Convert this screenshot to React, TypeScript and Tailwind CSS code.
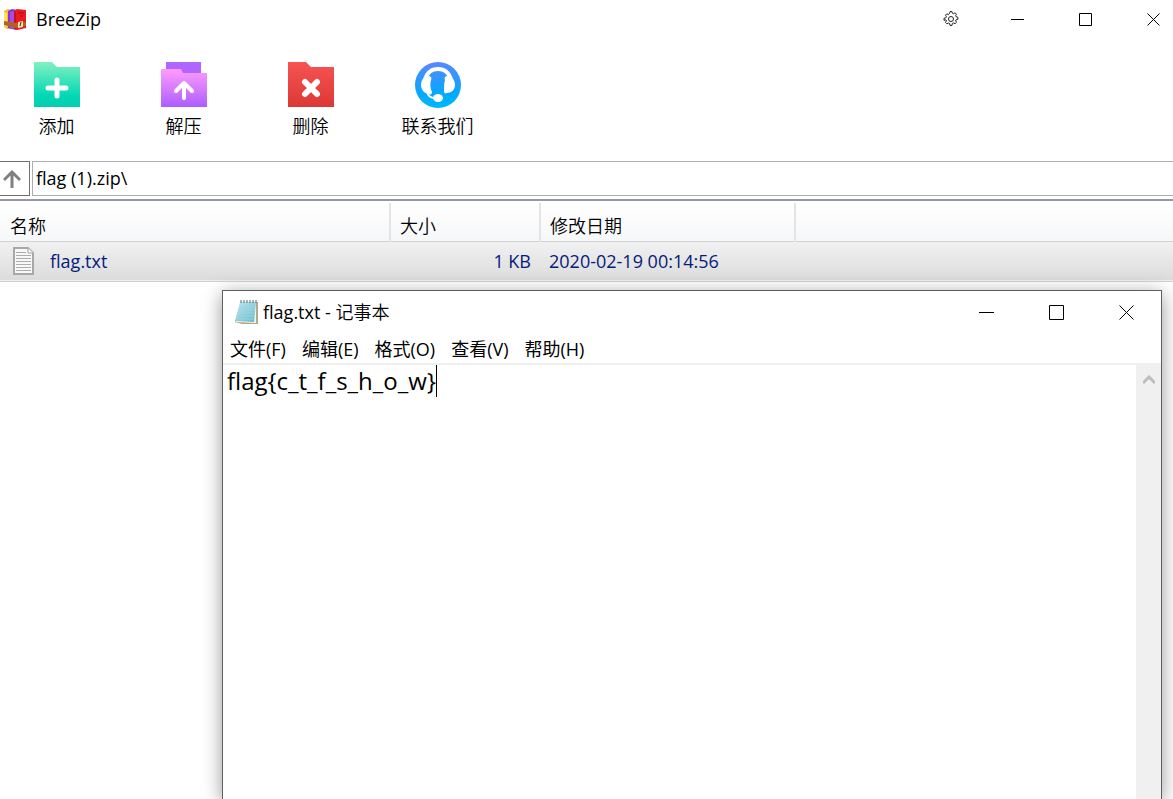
import { useState } from "react";
import type { ReactNode } from "react";

const files = [{ name: "flag.txt", size: "1 KB", modified: "2020-02-19 00:14:56" }];

const menus = ["文件(F)", "编辑(E)", "格式(O)", "查看(V)", "帮助(H)"];

function AppLogo() {
  return (
    <svg width="24" height="24" viewBox="0 0 24 24" aria-hidden="true">
      <path d="M1 4l4-2 4 1v18l-5 1-3-2z" fill="#f5b82e" />
      <path d="M1 5l3 1v14l-3-1z" fill="#ffe45c" />
      <path d="M5 4l4-2 5 1v20l-6-1-3-1z" fill="#8a35c9" />
      <path d="M7 5l4-1v18l-4-1z" fill="#a54be8" />
      <path d="M11 4l3-2 9 1v18l-9 2-3-1z" fill="#ee1820" />
      <path d="M11 4l2 1v17l-2-1z" fill="#c80f1a" />
      <path d="M15 6h6M17 9h3" stroke="#a81010" strokeWidth="1" />
      <path d="M1 14l12 2 10-1v4l-10 2-12-3z" fill="#b0641c" />
      <path d="M15 15l5-1v6l-5 1z" fill="#f3dfb0" />
      <path d="M18 15l-1 4" stroke="#3f2a18" strokeWidth="1" fill="none" />
    </svg>
  );
}

function AddIcon() {
  return (
    <svg width="46" height="46" viewBox="0 0 46 46" aria-hidden="true">
      <defs>
        <linearGradient id="add" x1="0" y1="0" x2="0" y2="1">
          <stop offset="0" stopColor="#83f0c0" />
          <stop offset="0.75" stopColor="#02d8b5" />
          <stop offset="1" stopColor="#06cdb0" />
        </linearGradient>
      </defs>
      <path d="M0 0h18l5 5h23v40H0z" fill="url(#add)" />
      <path d="M23 18v16M14 26h18" stroke="#fff" strokeWidth="5" strokeLinecap="round" />
    </svg>
  );
}

function ExtractIcon() {
  return (
    <svg width="46" height="46" viewBox="0 0 46 46" aria-hidden="true">
      <defs>
        <linearGradient id="extract" x1="0" y1="0" x2="0" y2="1">
          <stop offset="0" stopColor="#ff9cff" />
          <stop offset="1" stopColor="#ad5dff" />
        </linearGradient>
      </defs>
      <path d="M5 0h35v14H5z" fill="#b065ff" />
      <path d="M0 7h20l2 4h24v34H0z" fill="url(#extract)" />
      <path d="M23 36V22M15 29l8-8 8 8" stroke="#fff" strokeWidth="4" strokeLinecap="round" strokeLinejoin="round" fill="none" />
    </svg>
  );
}

function DeleteIcon() {
  return (
    <svg width="46" height="46" viewBox="0 0 46 46" aria-hidden="true">
      <defs>
        <linearGradient id="delete" x1="0" y1="0" x2="0" y2="1">
          <stop offset="0" stopColor="#f75353" />
          <stop offset="1" stopColor="#dc3835" />
        </linearGradient>
      </defs>
      <path d="M0 0h18l5 5h23v40H0z" fill="url(#delete)" />
      <path d="M17 20l12 12M29 20L17 32" stroke="#fff" strokeWidth="6" strokeLinecap="round" />
    </svg>
  );
}

function ContactIcon() {
  return (
    <svg width="46" height="46" viewBox="0 0 46 46" aria-hidden="true">
      <defs>
        <linearGradient id="contact" x1="0" y1="0" x2="0" y2="1">
          <stop offset="0" stopColor="#5c86ff" />
          <stop offset="0.7" stopColor="#00aaff" />
          <stop offset="1" stopColor="#00b8ff" />
        </linearGradient>
      </defs>
      <circle cx="23" cy="23" r="23" fill="url(#contact)" />
      <path d="M10 18C12 10 17 7 23 7s11 3 13 11" stroke="#fff" strokeWidth="4" fill="none" />
      <path d="M13 14c3 0 4 2 3 4-1 4-1 8 1 12 0 2-1 3-3 2-4 0-8-4-8-9s3-9 7-9z" fill="#fff" />
      <path d="M33 14c-3 0-4 2-3 4-1 4-1 7-1 11 0 2 1 3 3 2 4 0 8-3 8-8s-3-9-7-9z" fill="#fff" />
      <path d="M12 30c1 4 4 6 8 6" stroke="#fff" strokeWidth="2" fill="none" />
      <ellipse cx="23" cy="36" rx="5" ry="4" fill="#fff" />
    </svg>
  );
}

function GearIcon() {
  return (
    <svg width="16" height="16" viewBox="0 0 16 16" fill="none" stroke="#222" aria-hidden="true">
      <path
        d="M6.6 2.2L7 .6h2l.4 1.6 1.1.5 1.5-.9 1.5 1.4-.9 1.5.5 1.1 1.8.5v2l-1.8.4-.5 1.1.9 1.5-1.4 1.4-1.5-.8-1.2.5-.4 2H7l-.4-1.9-1.2-.5-1.5.8-1.4-1.4.9-1.5-.5-1.1L1 9.3v-2l1.9-.5.5-1.1-.9-1.5 1.4-1.4 1.5.9z"
        strokeLinejoin="round"
      />
      <circle cx="8" cy="8" r="2.5" />
    </svg>
  );
}

function FileIcon() {
  return (
    <svg width="24" height="28" viewBox="0 0 24 28" aria-hidden="true">
      <path d="M2 1h14l5 5v21H2z" fill="#f8f8f8" stroke="#a8a8a8" strokeWidth="2" />
      <path d="M16 1v5h5" fill="#fff" stroke="#a0a0a0" />
      <path d="M4 5.5h10M4 8.5h15M4 11.5h15M4 14.5h15M4 17.5h15M4 20.5h15M4 23.5h15" stroke="#acacac" />
    </svg>
  );
}

function NotepadIcon() {
  return (
    <svg width="24" height="26" viewBox="0 0 24 26" aria-hidden="true">
      <defs>
        <linearGradient id="pad" x1="0" y1="0" x2="1" y2="1">
          <stop offset="0" stopColor="#c2eaf0" />
          <stop offset="1" stopColor="#66b8cb" />
        </linearGradient>
      </defs>
      <path d="M6 4l17-1v22H7L0 23z" fill="#b5a88a" />
      <path d="M5 3h16v21l-20-1z" fill="#f4f4ee" />
      <path d="M5 3h16l-2 20-19-1z" fill="url(#pad)" />
      <path d="M5 8h15M4 11h16M4 14h15M3 17h16M3 20h15" stroke="#9ad5e0" strokeWidth="1" />
      <path d="M6 4V1M9 4V1M12 4V1M15 4V1M18 4V1M21 4V1" stroke="#57666b" strokeWidth="1" />
    </svg>
  );
}

// minimize / maximize / close glyphs, shared by both windows
function WindowGlyph({ kind, size }: { kind: "min" | "max" | "close"; size: number }) {
  const end = size - 0.5;
  const mid = Math.floor(size / 2) + 0.5;
  return (
    <svg width={size} height={size} fill="none" stroke="#000" aria-hidden="true">
      {kind === "min" && <path d={`M0 ${mid}H${size}`} />}
      {kind === "max" && <path d={`M.5 .5H${end}V${end}H.5z`} />}
      {kind === "close" && <path d={`M.5 .5L${end} ${end}M${end} .5L.5 ${end}`} />}
    </svg>
  );
}

function ToolButton({ label, children }: { label: string; children: ReactNode }) {
  return (
    <button type="button" className="flex w-[113px] flex-col items-center gap-1 hover:bg-gray-100">
      {children}
      <span className="leading-7 font-[350] whitespace-nowrap">{label}</span>
    </button>
  );
}

function Notepad() {
  const [text, setText] = useState("flag{c_t_f_s_h_o_w}");

  return (
    <section className="absolute top-[290px] right-[11px] bottom-0 left-[222px] flex flex-col border border-b-0 border-[#5f5f5f] bg-white shadow-[0_4px_18px_rgba(0,0,0,0.4)]">
      <header className="flex h-[42px] items-center justify-between pl-3">
        <h2 className="flex items-center gap-1">
          <NotepadIcon />
          <span>
            flag.txt - <span className="font-[350]">记事本</span>
          </span>
        </h2>
        <div className="flex h-full">
          <button type="button" aria-label="最小化" className="flex w-[70px] items-center justify-center">
            <WindowGlyph kind="min" size={15} />
          </button>
          <button type="button" aria-label="最大化" className="flex w-[70px] items-center justify-center">
            <WindowGlyph kind="max" size={15} />
          </button>
          <button type="button" aria-label="关闭" className="flex w-[70px] items-center justify-center">
            <WindowGlyph kind="close" size={15} />
          </button>
        </div>
      </header>
      <nav className="flex h-[30px] items-end gap-4 px-[7px]">
        {menus.map((menu) => (
          <button key={menu} type="button" className="leading-7">
            {menu}
          </button>
        ))}
      </nav>
      <div className="flex flex-1 border-t-2 border-[#f0f0f0]">
        <div className="flex flex-1 items-start pl-1">
          <textarea
            aria-label="文本"
            value={text}
            rows={1}
            spellCheck={false}
            onChange={(e) => setText(e.target.value)}
            className="field-sizing-content resize-none overflow-hidden text-2xl leading-8 whitespace-pre outline-none"
          />
          <span className="h-8 w-px bg-black" />
        </div>
        <div className="w-[25px] bg-[#f0f0f0]">
          <button type="button" aria-label="向上滚动" className="flex h-[30px] w-full items-center justify-center">
            <svg width="12" height="10" viewBox="0 0 12 10" fill="none" stroke="#bdbdbd" strokeWidth="3" aria-hidden="true">
              <path d="M0 8l6-6 6 6" />
            </svg>
          </button>
        </div>
      </div>
    </section>
  );
}

export default function App() {
  const [path, setPath] = useState("flag (1).zip\\");

  return (
    <main className="relative min-h-screen overflow-hidden bg-white font-['Open_Sans','Noto_Sans_CJK_SC',sans-serif] text-[18px] leading-6 text-black">
      <header className="flex h-[38px] items-center justify-between pl-[3px]">
        <h1 className="flex items-center gap-[9px]">
          <AppLogo />
          BreeZip
        </h1>
        <div className="-mr-[14px] flex h-full">
          <button type="button" aria-label="设置" className="flex w-16 items-center justify-center">
            <GearIcon />
          </button>
          <button type="button" aria-label="最小化" className="flex w-[68px] items-center justify-center">
            <WindowGlyph kind="min" size={13} />
          </button>
          <button type="button" aria-label="最大化" className="flex w-[68px] items-center justify-center">
            <WindowGlyph kind="max" size={13} />
          </button>
          <button type="button" aria-label="关闭" className="flex w-[68px] items-center justify-center">
            <WindowGlyph kind="close" size={13} />
          </button>
        </div>
      </header>

      <div className="flex h-[123px] gap-[14px] pt-6">
        <ToolButton label="添加">
          <AddIcon />
        </ToolButton>
        <ToolButton label="解压">
          <ExtractIcon />
        </ToolButton>
        <ToolButton label="删除">
          <DeleteIcon />
        </ToolButton>
        <ToolButton label="联系我们">
          <ContactIcon />
        </ToolButton>
      </div>

      <div className="flex h-[35px] gap-[2px]">
        <button
          type="button"
          aria-label="上一级"
          className="flex w-[30px] items-center border border-l-0 border-[#707070] pl-[3px]"
        >
          <svg width="18" height="18" viewBox="0 0 18 18" fill="none" stroke="#808080" strokeWidth="3" aria-hidden="true">
            <path d="M9 18V2M1 10l8-8 8 8" />
          </svg>
        </button>
        <input
          aria-label="路径"
          value={path}
          onChange={(e) => setPath(e.target.value)}
          className="flex-1 border border-r-0 border-[#abadb3] pb-[2px] pl-[3px] outline-none"
        />
      </div>

      <div className="mt-[3px] border-t-2 border-[#9599a1] pt-[2px]">
        <table className="w-full table-fixed border-collapse">
          <colgroup>
            <col className="w-[390px]" />
            <col className="w-[150px]" />
            <col className="w-[255px]" />
            <col />
          </colgroup>
          <thead>
            <tr className="h-[38px] bg-linear-to-b from-white to-[#f6f7f8] text-left">
              <th className="border-r-2 border-[#e4e4e4] pt-2 pb-0 pl-[10px] font-[350]">名称</th>
              <th className="border-r-2 border-[#e4e4e4] pt-2 pb-0 pl-[9px] font-[350]">大小</th>
              <th className="border-r-2 border-[#e4e4e4] pt-2 pb-0 pl-[9px] font-[350]">修改日期</th>
              <th />
            </tr>
          </thead>
          <tbody>
            {files.map((file) => (
              <tr
                key={file.name}
                className="h-10 border-y border-[#d0d0d0] bg-linear-to-b from-[#f1f1f1] to-[#dcdcdc] text-[#04207a]"
              >
                <td className="pl-3">
                  <span className="flex items-center gap-[14px]">
                    <FileIcon />
                    {file.name}
                  </span>
                </td>
                <td className="pr-[9px] text-right">{file.size}</td>
                <td className="pl-[9px]">{file.modified}</td>
                <td />
              </tr>
            ))}
          </tbody>
        </table>
      </div>

      <Notepad />
    </main>
  );
}
